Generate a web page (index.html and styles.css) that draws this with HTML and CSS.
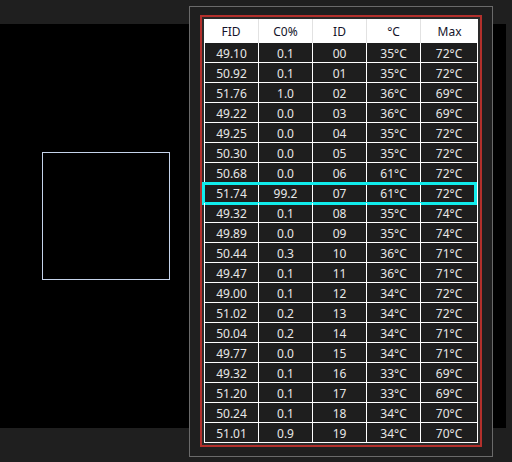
FILE: index.html
```html
<!DOCTYPE html>
<html>
<head>
<meta charset="utf-8">
<link rel="stylesheet" href="styles.css">
</head>
<body>
<div class="stage">
  <div class="square"></div>
</div>
<div class="popup">
  <div class="frame">
    <div class="grid">
      <div class="head">
        <div>FID</div><div>C0%</div><div>ID</div><div>°C</div><div>Max</div>
      </div>
      <div class="row"><div>49.10</div><div>0.1</div><div>00</div><div>35°C</div><div>72°C</div></div>
      <div class="row"><div>50.92</div><div>0.1</div><div>01</div><div>35°C</div><div>72°C</div></div>
      <div class="row"><div>51.76</div><div>1.0</div><div>02</div><div>36°C</div><div>69°C</div></div>
      <div class="row"><div>49.22</div><div>0.0</div><div>03</div><div>36°C</div><div>69°C</div></div>
      <div class="row"><div>49.25</div><div>0.0</div><div>04</div><div>35°C</div><div>72°C</div></div>
      <div class="row"><div>50.30</div><div>0.0</div><div>05</div><div>35°C</div><div>72°C</div></div>
      <div class="row"><div>50.68</div><div>0.0</div><div>06</div><div>61°C</div><div>72°C</div></div>
      <div class="row selected"><div>51.74</div><div>99.2</div><div>07</div><div>61°C</div><div>72°C</div></div>
      <div class="row"><div>49.32</div><div>0.1</div><div>08</div><div>35°C</div><div>74°C</div></div>
      <div class="row"><div>49.89</div><div>0.0</div><div>09</div><div>35°C</div><div>74°C</div></div>
      <div class="row"><div>50.44</div><div>0.3</div><div>10</div><div>36°C</div><div>71°C</div></div>
      <div class="row"><div>49.47</div><div>0.1</div><div>11</div><div>36°C</div><div>71°C</div></div>
      <div class="row"><div>49.00</div><div>0.1</div><div>12</div><div>34°C</div><div>72°C</div></div>
      <div class="row"><div>51.02</div><div>0.2</div><div>13</div><div>34°C</div><div>72°C</div></div>
      <div class="row"><div>50.04</div><div>0.2</div><div>14</div><div>34°C</div><div>71°C</div></div>
      <div class="row"><div>49.77</div><div>0.0</div><div>15</div><div>34°C</div><div>71°C</div></div>
      <div class="row"><div>49.32</div><div>0.1</div><div>16</div><div>33°C</div><div>69°C</div></div>
      <div class="row"><div>51.20</div><div>0.1</div><div>17</div><div>33°C</div><div>69°C</div></div>
      <div class="row"><div>50.24</div><div>0.1</div><div>18</div><div>34°C</div><div>70°C</div></div>
      <div class="row"><div>51.01</div><div>0.9</div><div>19</div><div>34°C</div><div>70°C</div></div>
    </div>
  </div>
</div>
</body>
</html>
```

FILE: styles.css
```css
html, body {
  margin: 0;
  padding: 0;
  background: #1f1f1f;
  width: 512px;
  height: 462px;
  overflow: hidden;
  font-family: "Noto Sans", "Open Sans", sans-serif;
  font-size: 12px;
}

.stage {
  margin-top: 24px;
  width: 506px;
  height: 404px;
  background: #000;
  padding-top: 128px;
  padding-left: 42px;
  box-sizing: border-box;
}

.square {
  width: 128px;
  height: 128px;
  box-sizing: border-box;
  border: 1px solid #c5d3ea;
}

.popup {
  position: absolute;
  left: 189px;
  top: 6px;
  width: 304px;
  height: 451px;
  box-sizing: border-box;
  border: 1px solid #6a6a6a;
  background: #1f1f1f;
  padding: 8px 10px;
}

.frame {
  width: 282px;
  box-sizing: border-box;
  border: 2px solid #b3302c;
  background: #2a2a2a;
  padding: 2px;
}

.grid {
  position: relative;
  width: 274px;
  background: #1e1e1e;
}

.head {
  display: grid;
  grid-template-columns: 55px 54px 54px 54px 57px;
  height: 24px;
  background: #fff;
  color: #14142a;
}

.head > div {
  display: flex;
  align-items: center;
  justify-content: center;
  border-right: 1px solid #e2e2e2;
}

.head > div:last-child {
  border-right: none;
}

.row {
  position: relative;
  display: grid;
  grid-template-columns: 55px 54px 54px 54px 57px;
  height: 20px;
  color: #e8e8e8;
}

.row > div {
  display: flex;
  align-items: center;
  justify-content: center;
  border-right: 1px solid #fff;
  border-bottom: 1px solid #fff;
  box-sizing: border-box;
  padding-top: 1px;
}

.row > div:first-child {
  border-left: 1px solid #fff;
}

.row.selected::after {
  content: "";
  position: absolute;
  left: -2px;
  top: -1px;
  width: 275px;
  height: 23px;
  box-sizing: border-box;
  border: 3px solid #10ecec;
  pointer-events: none;
}
```
